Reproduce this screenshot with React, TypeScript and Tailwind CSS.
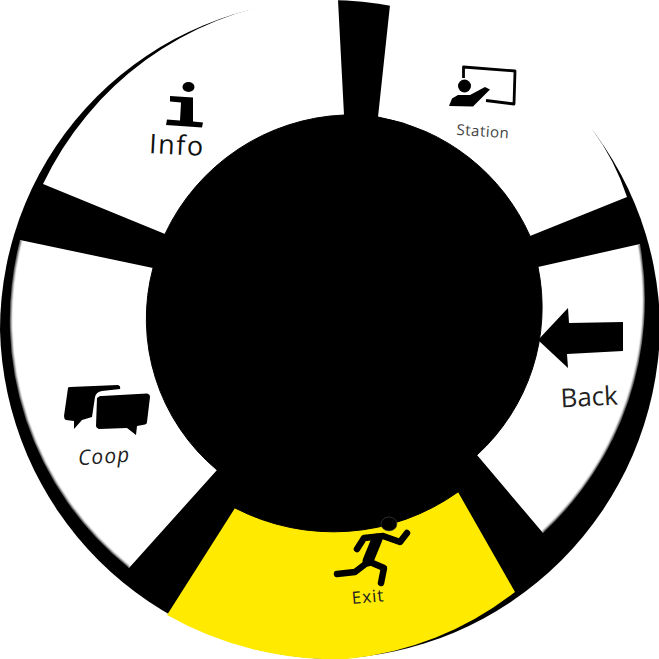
import React from 'react';

// Wheel segments, traced from the picture
const WHITE_SEGMENTS = [
  // Station
  'M378 117 L390 5 L660 -5 L592 129 A240 240 0 0 1 627 197 L530 236 A205 205 0 0 0 378 117 Z',
  // Back
  'M538 267 L640 244 A318 318 0 0 1 543 533 L477 455 A200 200 0 0 0 538 267 Z',
  // Coop
  'M217 470 L129 568 A318 318 0 0 1 20 240 L153 268 A197 197 0 0 0 217 470 Z',
  // Info
  'M165 234 L43 184 A328 328 0 0 1 295 0 L338 0 L344 115 A207 207 0 0 0 165 234 Z',
];

// the round edges of the segments are soft in the picture
const SOFT_INNER = [
  'M378 117 A205 205 0 0 1 530 236',
  'M477 455 A200 200 0 0 0 538 267',
  'M217 470 A197 197 0 0 1 153 268',
  'M165 234 A207 207 0 0 1 344 115',
  'M235 508 A215 215 0 0 0 458 492',
];
const SOFT_OUTER = [
  'M640 244 A318 318 0 0 1 543 533',
  'M129 568 A318 318 0 0 1 20 240',
];

const Wheel = () => (
  <svg viewBox="0 0 659 659" className="absolute inset-0 w-full h-full">
    <defs>
      <filter id="soft" x="-10%" y="-10%" width="120%" height="120%">
        <feGaussianBlur stdDeviation="0.5" />
      </filter>
      <filter id="softer" x="-10%" y="-10%" width="120%" height="120%">
        <feGaussianBlur stdDeviation="1" />
      </filter>
    </defs>

    <path d="M0 330 A330 330 0 0 1 660 330 A337 337 0 0 1 330 659 A337 337 0 0 1 0 330 Z" fill="#000" />
    {WHITE_SEGMENTS.map((d, i) => (
      <path key={i} d={d} fill="#fff" />
    ))}
    {/* Exit, highlighted */}
    <path d="M235 508 A215 215 0 0 0 458 492 L515 592 A320 320 0 0 1 347 659 A340 340 0 0 1 167 615 Z" fill="#ffea00" />

    <g fill="none" stroke="#000" filter="url(#soft)">
      {SOFT_INNER.map((d, i) => (
        <path key={i} d={d} strokeWidth="1" />
      ))}
    </g>
    <g fill="none" stroke="#000" filter="url(#softer)">
      {SOFT_OUTER.map((d, i) => (
        <path key={i} d={d} strokeWidth="2" />
      ))}
    </g>

    {/* info */}
    <ellipse cx="188.500" cy="87" rx="6" ry="5" fill="#000" />
    <path d="M170 96 L193 97.500 L193 121.500 L203 122.500 L202 127.500 L166 125 L167 119.500 L180 120.500 L181 102.500 L170 101.500 Z" fill="#000" />

    {/* station */}
    <path d="M463.500 78 L463.500 67 L515 71 L514 104 L486 100.500" fill="none" stroke="#000" strokeWidth="2.800" strokeLinejoin="round" />
    <circle cx="464.500" cy="86" r="6.500" fill="#000" />
    <path d="M449 106 L452 98.500 L458 95 L470 95 L485 87 L490 89.500 L473 106.500 Z" fill="#000" strokeLinejoin="round" />

    {/* back arrow */}
    <path d="M538 340 L568 308 L569 323 L623 322 L623 351 L567 354 L568 368 Z" fill="#000" />

    {/* coop */}
    <path d="M68 388 Q68 387 70 387 L118 385 Q121 386 120 389 L102 391 Q96 392 95 397 L92 417 L82 420 L74 429 L74 421 L66 420 Q64 419 64 416 Z" fill="#000" />
    <path d="M100 396 Q100 396 102 396 L147 393.500 Q150 394 150 397 L147 422 Q147 424 145 424.500 L137 426 L136 435 L127 428 L99 429 Q96 428 96 426 L97 398 Z" fill="#000" />

    {/* runner */}
    <ellipse cx="389" cy="524" rx="8" ry="7" fill="#000" stroke="#555" strokeWidth="0.500" />
    <g fill="none" stroke="#000" strokeLinecap="round" strokeLinejoin="round">
      <path d="M377 539 L368 561" strokeWidth="11" />
      <path d="M357 549 L364 538 L383 536 L400 542 L407 533" strokeWidth="6.500" />
      <path d="M368 562 L355 572 L337 574" strokeWidth="6.500" />
      <path d="M370 562 L384 568 L381 583" strokeWidth="6.500" />
    </g>
  </svg>
);

export default function App() {
  return (
    <div className="relative w-[659px] h-[659px] bg-white overflow-hidden font-['Open_Sans',sans-serif]">
      <Wheel />
      <span className="absolute left-[177px] top-[144px] -translate-x-1/2 -translate-y-1/2 rotate-[3deg] text-[27px] tracking-[1.500px] leading-none text-[#111]">Info</span>
      <span className="absolute left-[483px] top-[131px] -translate-x-1/2 -translate-y-1/2 rotate-[4deg] text-[15px] tracking-[0.5px] leading-none text-[#444]">Station</span>
      <span className="absolute left-[589px] top-[396px] -translate-x-1/2 -translate-y-1/2 -rotate-[3deg] text-[26px] leading-none text-[#222]">Back</span>
      <span className="absolute left-[104px] top-[456px] -translate-x-1/2 -translate-y-1/2 -rotate-[4deg] text-[21px] tracking-[1px] leading-none italic text-[#222]">Coop</span>
      <span className="absolute left-[368px] top-[596px] -translate-x-1/2 -translate-y-1/2 -rotate-[5deg] text-[17px] tracking-[1px] leading-none text-[#222]">Exit</span>
    </div>
  );
}
